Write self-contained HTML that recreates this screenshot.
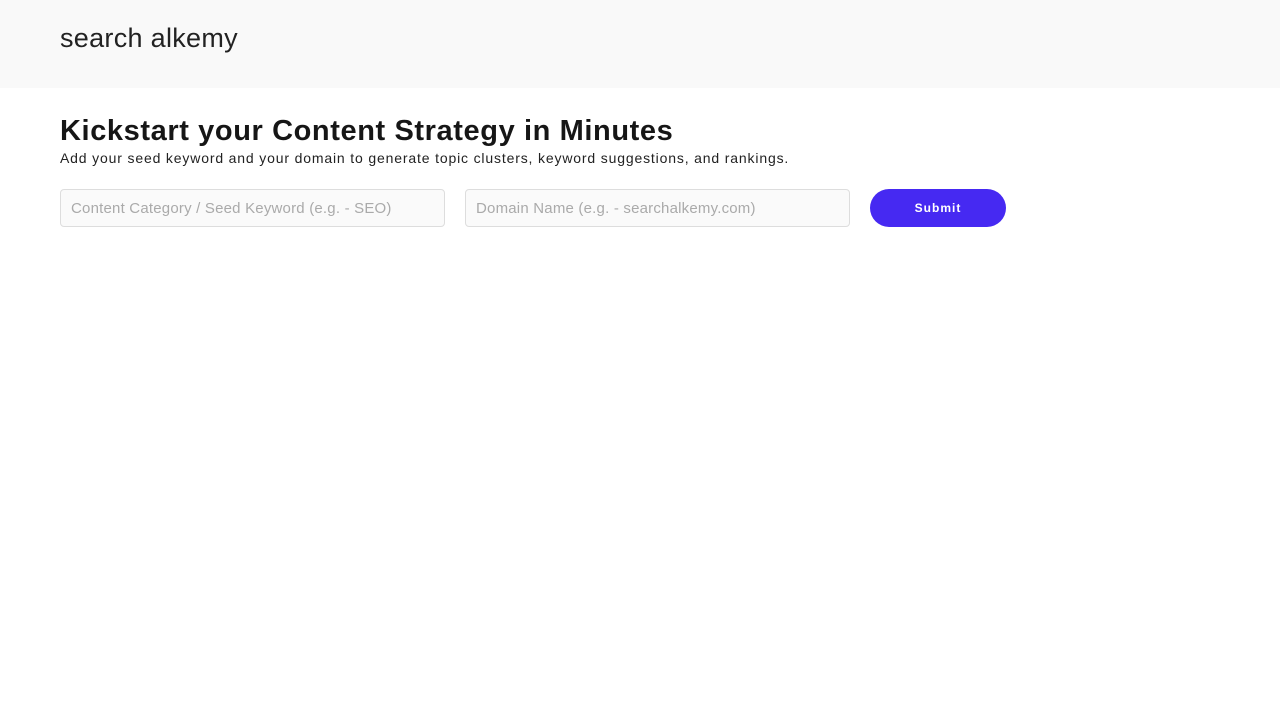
<!DOCTYPE html>
<html><head><style>
body{margin:0;background:#fff;font-family:"Liberation Sans",sans-serif;}
.hdr{height:88px;background:#f9f9f9;position:relative}
.logo{position:absolute;left:60px;top:23px;font-size:27px;color:#222;letter-spacing:0.3px}
h1{position:absolute;left:60px;top:115px;margin:0;font-size:29px;font-weight:bold;color:#161616;letter-spacing:0.6px}
.sub{position:absolute;left:60px;top:150px;font-size:14px;color:#222;letter-spacing:0.84px}
.in{position:absolute;top:189px;border:1px solid #ddd;border-radius:4px;background:#fafafa;font-size:15px;color:#aaa;line-height:38px;padding-left:10px;box-sizing:border-box;width:385px;height:38px;letter-spacing:0.2px}
.btn{position:absolute;left:870px;top:189px;width:136px;height:38px;border-radius:19px;background:#4629f2;color:#fff;font-size:12px;font-weight:bold;text-align:center;line-height:38px;letter-spacing:1px}
</style></head><body>
<div class="hdr"><div class="logo">search alkemy</div></div>
<h1>Kickstart your Content Strategy in Minutes</h1>
<div class="sub">Add your seed keyword and your domain to generate topic clusters, keyword suggestions, and rankings.</div>
<div class="in" style="left:60px">Content Category / Seed Keyword (e.g. - SEO)</div>
<div class="in" style="left:465px">Domain Name (e.g. - searchalkemy.com)</div>
<div class="btn">Submit</div>
</body></html>
